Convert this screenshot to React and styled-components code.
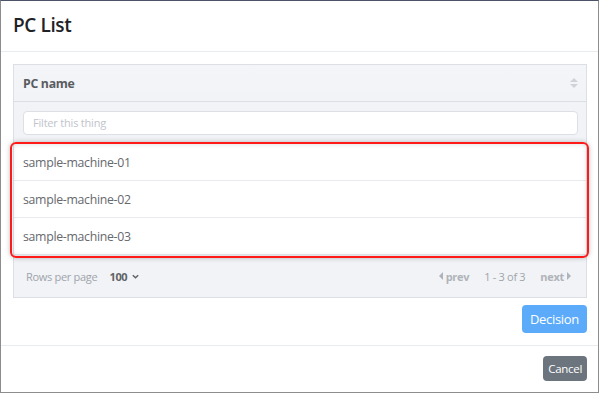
import React from 'react';
import styled, { createGlobalStyle } from 'styled-components';

const GlobalStyle = createGlobalStyle`
  html, body {
    margin: 0;
    padding: 0;
    background: #ffffff;
  }
  body {
    font-family: "Open Sans", "Noto Sans", sans-serif;
    color: #212529;
  }
`;

const Frame = styled.div`
  position: relative;
  box-sizing: border-box;
  width: 599px;
  height: 393px;
  border: 1px solid #8d8d8d;
  border-top-color: #4c5366;
  background: #fff;
  display: flex;
  flex-direction: column;
`;

const Header = styled.div`
  height: 51px;
  padding: 0 12px 3px;
  box-sizing: border-box;
  display: flex;
  align-items: center;
  border-bottom: 1px solid #e9ecef;
`;

const Title = styled.h5`
  margin: 0;
  font-size: 19px;
  font-weight: 600;
  color: #1f2327;
  letter-spacing: -0.4px;
`;

const Body = styled.div`
  padding: 12px 11px 12px 12px;
  display: flex;
  flex-direction: column;
  border-bottom: 1px solid #e9ecef;
`;

const Table = styled.div`
  border: 1px solid #dcdfe6;
  font-size: 12.3px;
  letter-spacing: -0.3px;
  color: #606266;
`;

const HeadRow = styled.div`
  height: 36px;
  display: flex;
  align-items: center;
  justify-content: space-between;
  padding: 0 9px;
  background: linear-gradient(#f4f5f8, #f1f3f6);
  border-bottom: 1px solid #dcdfe6;
  font-weight: 700;
  color: #5a5c61;
`;

const SortIcon = styled.span`
  display: flex;
  flex-direction: column;
  gap: 2px;
  margin-right: -1px;
`;

const Tri = styled.span`
  width: 0;
  height: 0;
  border-left: 4px solid transparent;
  border-right: 4px solid transparent;
  ${p => (p.$up ? 'border-bottom: 4px solid #cfd2d8;' : 'border-top: 4px solid #cfd2d8;')}
`;

const FilterRow = styled.div`
  height: 41px;
  display: flex;
  align-items: center;
  padding: 0 8px 0 9px;
  background: #f1f3f6;
  border-bottom: 1px solid #dcdfe6;
`;

const FilterInput = styled.input`
  box-sizing: border-box;
  width: 100%;
  height: 24px;
  border: 1px solid #dcdfe6;
  border-radius: 4px;
  padding: 0 9px;
  font-family: inherit;
  font-size: 11px;
  letter-spacing: -0.2px;
  color: #606266;
  background: #fff;
  outline: none;
  &::placeholder {
    color: #c0c4cc;
  }
`;

const Rows = styled.div`
  position: relative;
  background: #fff;
`;

const Row = styled.div`
  height: 36px;
  display: flex;
  align-items: center;
  padding: 0 9px;
  color: #66686d;
  border-bottom: 1px solid #e9eaee;
  &:last-child {
    border-bottom: 1px solid #dcdfe6;
  }
`;

const Highlight = styled.div`
  position: absolute;
  left: -4px;
  right: -3px;
  top: -2px;
  bottom: -3px;
  border: 2px solid #ff1a1a;
  border-radius: 6px;
  box-shadow: 0 0 5px rgba(0, 0, 0, 0.25), inset 0 0 5px rgba(0, 0, 0, 0.15);
  pointer-events: none;
`;

const Footer = styled.div`
  height: 42px;
  display: flex;
  align-items: center;
  justify-content: space-between;
  padding: 0 15px 0 12px;
  background: #f1f3f6;
  font-size: 11px;
  color: #a0a4ab;
`;

const PerPage = styled.div`
  display: flex;
  align-items: center;
  gap: 12px;
`;

const Select = styled.span`
  display: flex;
  align-items: center;
  gap: 4px;
  font-weight: 700;
  color: #606266;
`;

const Pager = styled.div`
  display: flex;
  align-items: center;
  gap: 15px;
`;

const PageLink = styled.span`
  display: flex;
  align-items: center;
  gap: 3px;
  font-weight: 700;
  color: #b0b3b9;
`;

const Arrow = styled.span`
  width: 0;
  height: 0;
  border-top: 4px solid transparent;
  border-bottom: 4px solid transparent;
  ${p => (p.$left ? 'border-right: 4px solid #b0b3b9;' : 'border-left: 4px solid #b0b3b9;')}
`;

const Actions = styled.div`
  display: flex;
  justify-content: flex-end;
  margin-top: 7px;
`;

const Button = styled.button`
  font-family: inherit;
  border: none;
  border-radius: 4px;
  color: #fff;
  cursor: pointer;
  letter-spacing: -0.3px;
  background: ${p => (p.$primary ? '#5cabfb' : '#6c757d')};
  height: ${p => (p.$primary ? '28px' : '25px')};
  font-size: ${p => (p.$primary ? '13px' : '11.5px')};
  padding: ${p => (p.$primary ? '0 8px' : '0 5px')};
`;

const ModalFooter = styled.div`
  flex: 1;
  display: flex;
  align-items: center;
  justify-content: flex-end;
  padding: 0 11px 2px 12px;
`;

const machines = ['sample-machine-01', 'sample-machine-02', 'sample-machine-03'];

export default function App() {
  return (
    <>
      <GlobalStyle />
      <Frame>
        <Header>
          <Title>PC List</Title>
        </Header>
        <Body>
          <Table>
            <HeadRow>
              <span>PC name</span>
              <SortIcon>
                <Tri $up />
                <Tri />
              </SortIcon>
            </HeadRow>
            <FilterRow>
              <FilterInput placeholder="Filter this thing" />
            </FilterRow>
            <Rows>
              {machines.map(m => (
                <Row key={m}>{m}</Row>
              ))}
              <Highlight />
            </Rows>
            <Footer>
              <PerPage>
                <span>Rows per page</span>
                <Select>
                  100
                  <svg width="9" height="9" viewBox="0 0 10 10">
                    <path d="M2 3.5 L5 6.5 L8 3.5" fill="none" stroke="#606266" strokeWidth="1.6" />
                  </svg>
                </Select>
              </PerPage>
              <Pager>
                <PageLink>
                  <Arrow $left />
                  prev
                </PageLink>
                <span>1 - 3 of 3</span>
                <PageLink>
                  next
                  <Arrow />
                </PageLink>
              </Pager>
            </Footer>
          </Table>
          <Actions>
            <Button $primary>Decision</Button>
          </Actions>
        </Body>
        <ModalFooter>
          <Button>Cancel</Button>
        </ModalFooter>
      </Frame>
    </>
  );
}
